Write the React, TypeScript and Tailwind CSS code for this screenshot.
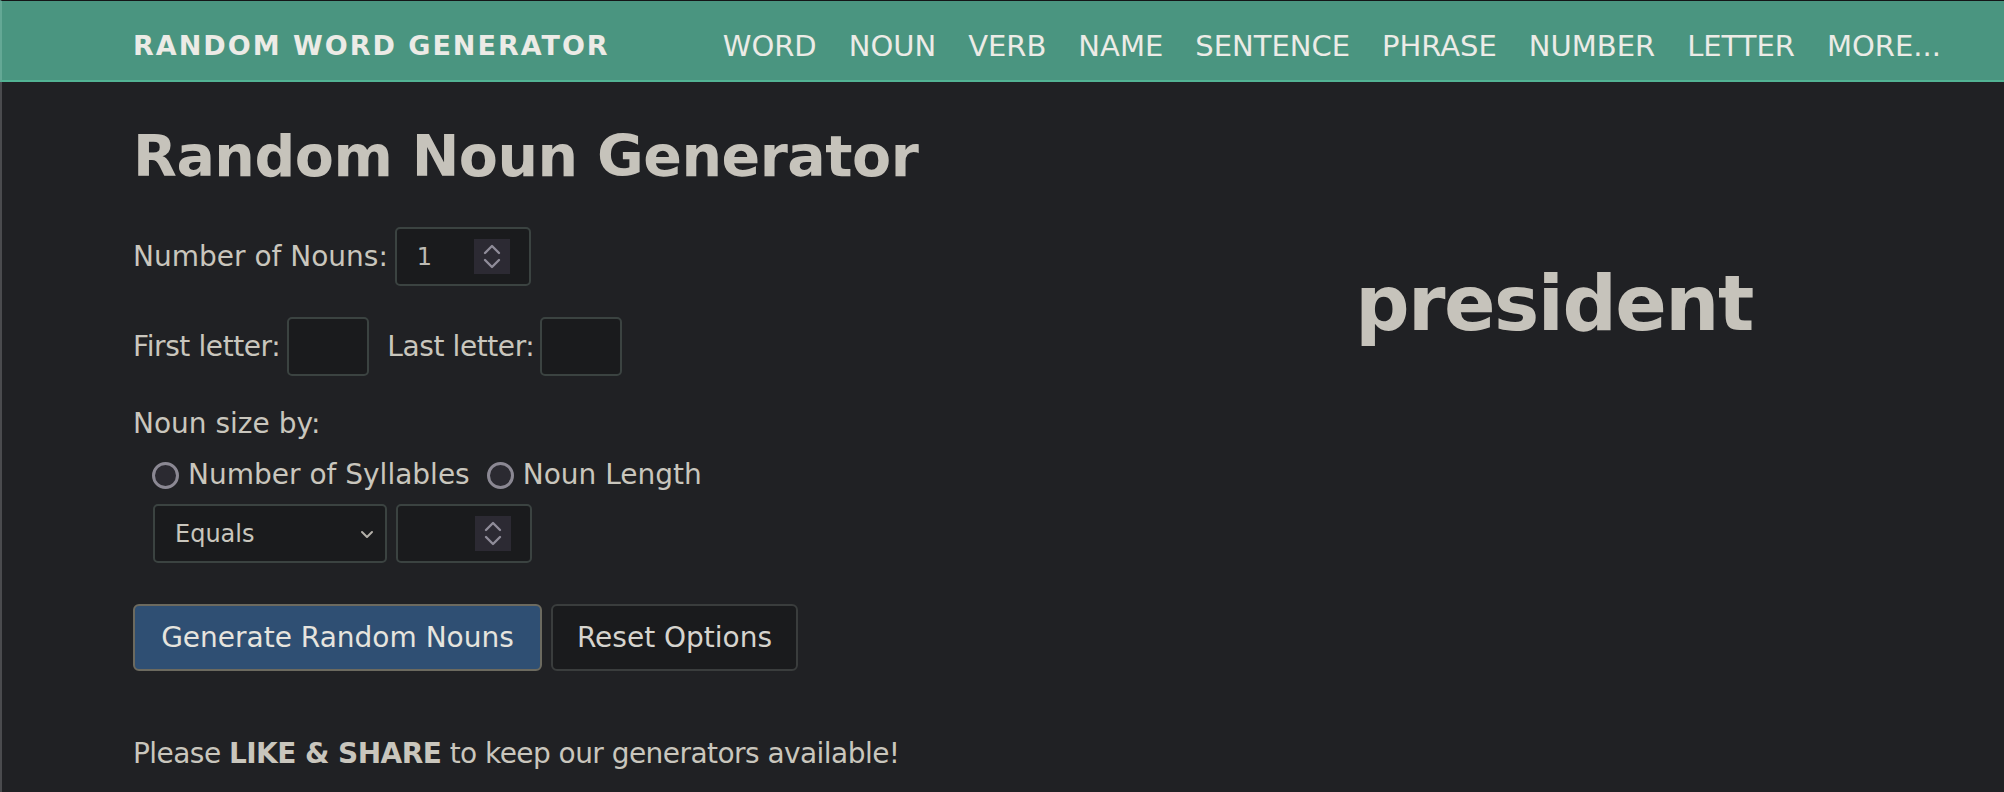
import React from "react";

const FONT = { fontFamily: '"DejaVu Sans", "Liberation Sans", sans-serif' };

function Spinner() {
  return (
    <div className="flex h-[35px] w-[36px] flex-col items-center justify-center gap-[3px] bg-[#2c2a33]">
      <svg width="18" height="11" viewBox="0 0 18 11" fill="none">
        <path d="M2 9 L9 2 L16 9" stroke="#8f8c99" strokeWidth="2.4" strokeLinecap="round" strokeLinejoin="round" />
      </svg>
      <svg width="18" height="11" viewBox="0 0 18 11" fill="none">
        <path d="M2 2 L9 9 L16 2" stroke="#8f8c99" strokeWidth="2.4" strokeLinecap="round" strokeLinejoin="round" />
      </svg>
    </div>
  );
}

function NumberBox({ value }: { value?: string }) {
  return (
    <div className="flex h-[59px] w-[136px] items-center justify-between rounded-[5px] border-2 border-[#3b4341] bg-[#1a1b1d] pl-[20px] pr-[19px]">
      <span className="text-[24px] text-[#bdbbb4]">{value ?? ""}</span>
      <Spinner />
    </div>
  );
}

function Radio({ label }: { label: string }) {
  return (
    <div className="flex items-center">
      <div className="h-[27px] w-[27px] rounded-full border-[3px] border-[#8b8893] bg-[#2b2a31]" />
      <span className="ml-[9px]">{label}</span>
    </div>
  );
}

export default function App() {
  const links = ["WORD", "NOUN", "VERB", "NAME", "SENTENCE", "PHRASE", "NUMBER", "LETTER", "MORE..."];
  return (
    <div className="min-h-[792px] w-full bg-[#202124] text-[#c9c6bd]" style={FONT}>
      <nav className="flex h-[82px] items-center border-t border-b-2 border-l-2 border-t-[#141517] border-b-[#52b394] border-l-[#64a895] bg-[#4a9580] pl-[131px] pr-[63px] pt-[12px]">
        <div className="text-[27px] font-bold tracking-[2px] text-[#ecebe6]">RANDOM WORD GENERATOR</div>
        <div className="ml-auto flex items-center gap-[32px] text-[29px] text-[#ecebe6]">
          {links.map((l) => (
            <span key={l}>{l}</span>
          ))}
        </div>
      </nav>
      <main className="flex min-h-[710px] border-l-2 border-l-[#4a4b4e]">
        <div className="w-[1100px] pl-[131px]">
          <h1 className="mt-[46px] text-[57px] font-bold leading-none tracking-[-0.5px] text-[#c6c3bb]">
            Random Noun Generator
          </h1>
          <div className="mt-[42px] flex h-[59px] items-center text-[28px]">
            <span>Number of Nouns:</span>
            <div className="ml-[7px]">
              <NumberBox value="1" />
            </div>
          </div>
          <div className="mt-[31px] flex h-[59px] items-center text-[28px]">
            <span className="tracking-[-0.4px]">First letter:</span>
            <div className="ml-[7px] h-[59px] w-[82px] rounded-[5px] border-2 border-[#3b4341] bg-[#1a1b1d]" />
            <span className="ml-[18px] tracking-[-0.4px]">Last letter:</span>
            <div className="ml-[6px] h-[59px] w-[82px] rounded-[5px] border-2 border-[#3b4341] bg-[#1a1b1d]" />
          </div>
          <div className="mt-[28px] flex h-[40px] items-center text-[28px]">Noun size by:</div>
          <div className="mt-[11px] flex h-[40px] items-center gap-[17px] pl-[19px] text-[28px]">
            <Radio label="Number of Syllables" />
            <Radio label="Noun Length" />
          </div>
          <div className="mt-[9px] flex items-center gap-[9px] pl-[20px]">
            <div className="flex h-[59px] w-[234px] items-center justify-between rounded-[5px] border-2 border-[#3b4341] bg-[#1a1b1d] pl-[20px] pr-[11px]">
              <span className="text-[24px] text-[#c9c6bd]">Equals</span>
              <svg width="14" height="10" viewBox="0 0 14 10" fill="none">
                <path d="M2 3 L7 8 L12 3" stroke="#b3b0a9" strokeWidth="2" strokeLinecap="round" strokeLinejoin="round" />
              </svg>
            </div>
            <NumberBox />
          </div>
          <div className="mt-[41px] flex items-center gap-[9px]">
            <button className="h-[67px] w-[409px] rounded-[6px] border-2 border-[#6c6a5f] bg-[#2f4f73] text-[28px] text-[#e6e4de]">
              Generate Random Nouns
            </button>
            <button className="h-[67px] w-[247px] rounded-[6px] border-2 border-[#3a3d3d] bg-[#1a1b1d] text-[28px] text-[#d6d4ce]">
              Reset Options
            </button>
          </div>
          <div className="mt-[63px] flex h-[40px] items-center text-[28px] tracking-[-0.55px]">
            <span>
              Please <b className="font-bold">LIKE &amp; SHARE</b> to keep our generators available!
            </span>
          </div>
        </div>
        <div className="flex-1 pl-[2px] pt-[184px] text-center">
          <div className="text-[76px] font-bold leading-none tracking-[-1.5px] text-[#c6c3bb]">president</div>
        </div>
      </main>
    </div>
  );
}
